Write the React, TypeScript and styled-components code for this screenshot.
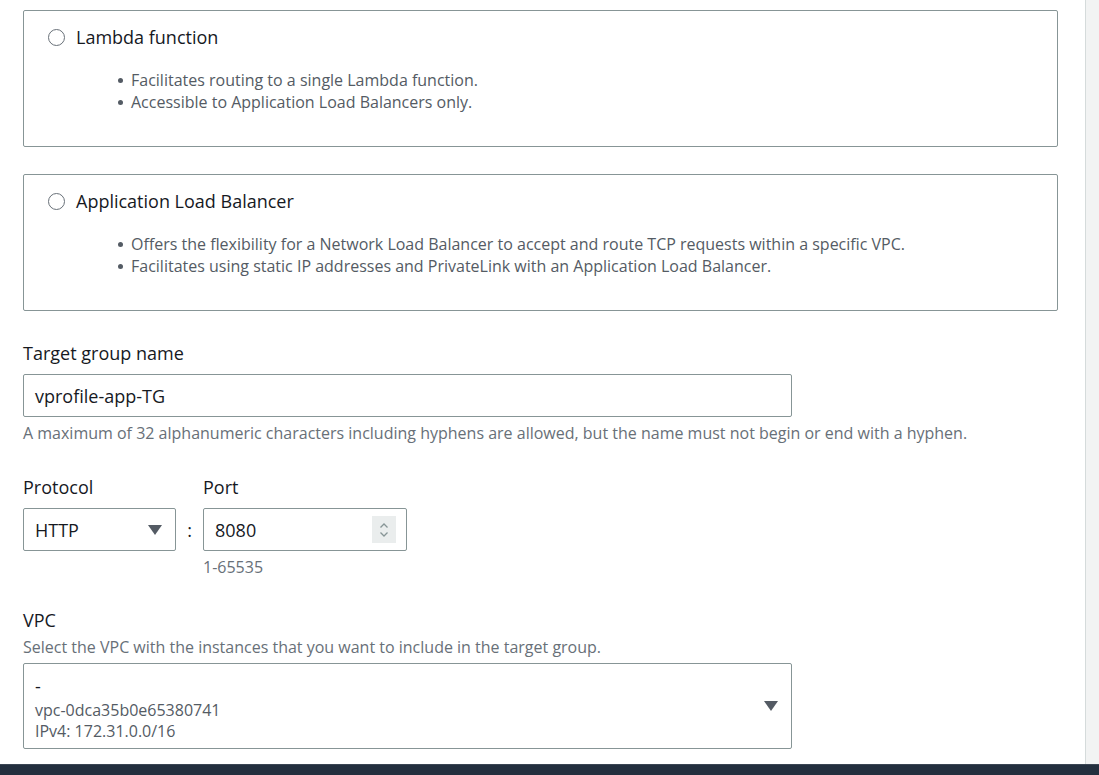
import React from 'react';
import styled, { createGlobalStyle } from 'styled-components';

const GlobalStyle = createGlobalStyle`
  html, body {
    margin: 0;
    padding: 0;
    background: #ffffff;
  }
  body {
    font-family: 'Open Sans', 'Noto Sans', sans-serif;
    color: #16191f;
    overflow: hidden;
  }
  * {
    box-sizing: border-box;
  }
`;

const Page = styled.div`
  width: 1099px;
  height: 775px;
  display: flex;
  flex-direction: column;
  overflow: hidden;
`;

const Body = styled.div`
  flex: 1;
  display: flex;
  min-height: 0;
`;

const Main = styled.main`
  width: 1086px;
  border-right: 1px solid #d5dbdb;
  padding: 10px 27px 0 23px;
  display: flex;
  flex-direction: column;
  overflow: hidden;
`;

const Side = styled.aside`
  flex: 1;
  background: #f2f3f3;
`;

const Footer = styled.footer`
  height: 11px;
  flex-shrink: 0;
  background: #232f3e;
  border-top: 1px solid #3b4654;
`;

const Tile = styled.label`
  display: block;
  height: 137px;
  border: 1px solid #879596;
  border-radius: 2px;
  padding: 13px 24px 0 24px;
  margin-bottom: 27px;
  cursor: pointer;
`;

const TileHead = styled.div`
  display: flex;
  align-items: center;
  gap: 11px;
  height: 26px;
`;

const Radio = styled.span`
  width: 17px;
  height: 17px;
  border-radius: 50%;
  border: 1.5px solid #687078;
  flex-shrink: 0;
`;

const TileTitle = styled.span`
  font-size: 18px;
  line-height: 26px;
`;

const Bullets = styled.ul`
  list-style: none;
  margin: 19px 0 0 0;
  padding: 0 0 0 83px;
`;

const Bullet = styled.li`
  position: relative;
  font-size: 16px;
  line-height: 22px;
  color: #545b64;

  &::before {
    content: '';
    position: absolute;
    left: -13px;
    top: 9px;
    width: 5px;
    height: 5px;
    border-radius: 50%;
    background: #545b64;
  }
`;

const Field = styled.div<{ $gap?: number }>`
  display: flex;
  flex-direction: column;
  margin-top: ${({ $gap }) => $gap ?? 0}px;
`;

const Label = styled.div`
  font-size: 18px;
  line-height: 24px;
  height: 24px;
  margin-bottom: 9px;
`;

const Hint = styled.div`
  font-size: 16px;
  line-height: 22px;
  color: #687078;
`;

const Desc = styled(Hint)`
  margin: -5px 0 5px;
`;

const TextInput = styled.div<{ $width: number }>`
  width: ${({ $width }) => $width}px;
  height: 43px;
  border: 1px solid #879596;
  border-radius: 2px;
  padding: 0 11px;
  display: flex;
  align-items: center;
  font-size: 18px;
`;

const Row = styled.div`
  display: flex;
  gap: 27px;
`;

const InlineGroup = styled.div`
  display: flex;
  align-items: center;
`;

const Colon = styled.span`
  width: 27px;
  text-align: center;
  font-size: 18px;
`;

const SelectBox = styled(TextInput)`
  justify-content: space-between;
  padding-right: 13px;
`;

const Caret = () => (
  <svg width="14" height="10" viewBox="0 0 14 10">
    <path d="M0 0 H14 L7 10 Z" fill="#545b64" />
  </svg>
);

const Spinner = styled.span`
  width: 24px;
  height: 27px;
  background: #eaeded;
  margin-left: auto;
  margin-right: -1px;
  display: flex;
  align-items: center;
  justify-content: center;
`;

const Under = styled(Hint)`
  margin-top: 5px;
  padding-left: 180px;
`;

const VpcBox = styled.div`
  width: 769px;
  height: 86px;
  border: 1px solid #879596;
  border-radius: 2px;
  padding: 0 13px 0 11px;
  display: flex;
  align-items: center;
`;

const VpcText = styled.div`
  flex: 1;
  align-self: flex-start;
  padding-top: 10px;
  display: flex;
  flex-direction: column;
`;

const VpcName = styled.div`
  font-size: 18px;
  line-height: 24px;
  margin-bottom: 2px;
`;

const VpcMeta = styled.div`
  font-size: 16px;
  line-height: 21px;
  color: #545b64;
`;

const tiles = [
  {
    title: 'Lambda function',
    points: [
      'Facilitates routing to a single Lambda function.',
      'Accessible to Application Load Balancers only.',
    ],
  },
  {
    title: 'Application Load Balancer',
    points: [
      'Offers the flexibility for a Network Load Balancer to accept and route TCP requests within a specific VPC.',
      'Facilitates using static IP addresses and PrivateLink with an Application Load Balancer.',
    ],
  },
];

export default function App() {
  return (
    <Page>
      <GlobalStyle />
      <Body>
        <Main>
          {tiles.map((t) => (
            <Tile key={t.title}>
              <TileHead>
                <Radio />
                <TileTitle>{t.title}</TileTitle>
              </TileHead>
              <Bullets>
                {t.points.map((p) => (
                  <Bullet key={p}>{p}</Bullet>
                ))}
              </Bullets>
            </Tile>
          ))}

          <Field $gap={3}>
            <Label>Target group name</Label>
            <TextInput $width={769}>vprofile-app-TG</TextInput>
            <Hint style={{ marginTop: 5 }}>
              A maximum of 32 alphanumeric characters including hyphens are allowed, but the name must not begin or end with a hyphen.
            </Hint>
          </Field>

          <Field $gap={31}>
            <Row>
              <Label style={{ width: 153 }}>Protocol</Label>
              <Label>Port</Label>
            </Row>
            <InlineGroup>
              <SelectBox $width={153}>
                HTTP
                <Caret />
              </SelectBox>
              <Colon>:</Colon>
              <TextInput $width={204}>
                8080
                <Spinner>
                  <svg width="10" height="16" viewBox="0 0 10 16">
                    <path
                      d="M1.5 5.5 L5 2 L8.5 5.5 M1.5 10.5 L5 14 L8.5 10.5"
                      fill="none"
                      stroke="#879596"
                      strokeWidth="1.3"
                    />
                  </svg>
                </Spinner>
              </TextInput>
            </InlineGroup>
            <Under>1-65535</Under>
          </Field>

          <Field $gap={30}>
            <Label>VPC</Label>
            <Desc>Select the VPC with the instances that you want to include in the target group.</Desc>
            <VpcBox>
              <VpcText>
                <VpcName>-</VpcName>
                <VpcMeta>vpc-0dca35b0e65380741</VpcMeta>
                <VpcMeta>IPv4: 172.31.0.0/16</VpcMeta>
              </VpcText>
              <Caret />
            </VpcBox>
          </Field>
        </Main>
        <Side />
      </Body>
      <Footer />
    </Page>
  );
}
